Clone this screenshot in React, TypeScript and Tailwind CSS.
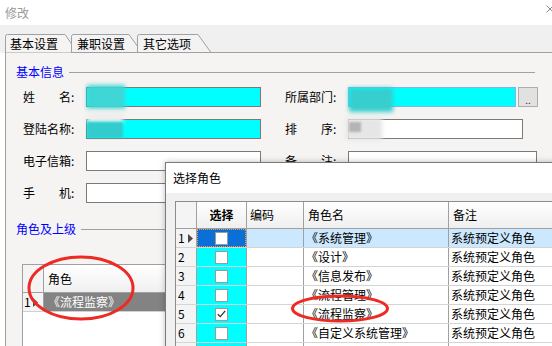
import React from 'react';

const roles = [
  { name: '《系统管理》', memo: '系统预定义角色', checked: false },
  { name: '《设计》', memo: '系统预定义角色', checked: false },
  { name: '《信息发布》', memo: '系统预定义角色', checked: false },
  { name: '《流程管理》', memo: '系统预定义角色', checked: false },
  { name: '《流程监察》', memo: '系统预定义角色', checked: true },
  { name: '《自定义系统管理》', memo: '系统预定义角色', checked: false },
  { name: '', memo: '', checked: false },
];

const Arrow = () => (
  <svg width="5" height="9" viewBox="0 0 5 9" className="shrink-0">
    <path d="M0 0 L5 4.5 L0 9 Z" fill="#4a4a4a" />
  </svg>
);

const Field = ({ label, w, cyan, children }: { label: string; w: string; cyan?: boolean; children?: React.ReactNode }) => (
  <div className="flex items-center">
    <span className="w-[63px] whitespace-pre">{label}</span>
    <div className={`relative h-[20px] border border-[#7a7a7a] ${w} ${cyan ? 'bg-[#00ffff]' : 'bg-white'}`}>{children}</div>
  </div>
);

const GroupHeader = ({ title }: { title: string }) => (
  <div className="ml-[10px] w-[519px] h-[16px] flex items-center gap-[5px]">
    <span className="text-[#0000ff] whitespace-nowrap">{title}</span>
    <div className="flex-1 h-px bg-[#a0a0a0]" />
  </div>
);

export default function App() {
  return (
    <div className="relative w-[552px] h-[346px] overflow-hidden bg-white text-[12px] leading-[16px] text-black font-['Noto_Sans_CJK_SC',sans-serif]">
      {/* title bar */}
      <div className="h-[25px] flex items-center pl-[5px] text-[#9a9a9a]">修改</div>
      <svg className="absolute left-[546px] top-[5px]" width="8" height="8" viewBox="0 0 8 8">
        <path d="M0.5 0.5 L7.5 7.5 M7.5 0.5 L0.5 7.5" stroke="#8a8a8a" strokeWidth="1" />
      </svg>

      {/* tabs */}
      <div className="relative h-[28px] bg-[#f0f0f0]">
        <svg className="absolute inset-0" width="552" height="28" viewBox="0 0 552 28">
          <path d="M5.5 28 V11.5 Q5.5 9.5 7.5 9.5 H65 L78 28 Z" fill="#f5f4f2" stroke="#a0a0a0" />
          <path d="M71.5 27.5 V11.5 Q71.5 9.5 73.5 9.5 H129 L142 27.5" fill="#f3f3f3" stroke="#a0a0a0" />
          <path d="M137.5 27.5 V11.5 Q137.5 9.5 139.5 9.5 H198 L211 27.5" fill="#f3f3f3" stroke="#a0a0a0" />
          <path d="M71 27.5 H552" stroke="#a0a0a0" />
        </svg>
        <div className="relative flex pt-[11px] pl-[10px]">
          <span className="w-[48px]">基本设置</span>
          <span className="w-[48px] ml-[19px]">兼职设置</span>
          <span className="w-[48px] ml-[18px]">其它选项</span>
        </div>
      </div>

      {/* panel */}
      <div className="ml-[5px] h-[300px] border-l border-[#a0a0a0] bg-[#f5f4f2] pt-[11px]">
        <GroupHeader title="基本信息" />
        <div className="mt-[7px] pl-[17px] flex flex-col gap-[12px]">
          <div className="flex items-center">
            <Field label="姓　　名:" w="w-[175px]" cyan>
              <div className="absolute left-[0px] top-[-3px] w-[38px] h-[24px] bg-[#3fd6d6] blur-[2px]" />
            </Field>
            <div className="ml-[24px] flex items-center">
              <Field label="所属部门:" w="w-[168px] !border-[#7eb4ea]" cyan>
                <div className="absolute left-[0px] top-[0px] w-[44px] h-[24px] bg-[#36cece] blur-[2px]" />
              </Field>
              <div className="ml-[2px] w-[20px] h-[20px] border border-[#adadad] bg-[#e1e1e1] flex items-end justify-center text-[10px] leading-[12px] text-[#333]">..</div>
            </div>
          </div>
          <div className="flex items-center">
            <Field label="登陆名称:" w="w-[175px]" cyan>
              <div className="absolute left-[0px] top-[-9px] w-[36px] h-[12px] bg-[#eeeeee] blur-[2px]" />
              <div className="absolute left-[0px] top-[2px] w-[36px] h-[16px] bg-[#33cccc] blur-[1px]" />
            </Field>
            <div className="ml-[24px]">
              <Field label="排　　序:" w="w-[175px]">
                <div className="absolute left-[-3px] top-[-2px] w-[36px] h-[22px] bg-[#e6e6e6] blur-[2px]" />
                <div className="absolute left-[0px] top-[2px] w-[12px] h-[10px] bg-[#b4b4b4] blur-[1px]" />
              </Field>
            </div>
          </div>
          <div className="flex items-center">
            <Field label="电子信箱:" w="w-[175px]" />
            <div className="ml-[24px]">
              <Field label="备　　注:" w="w-[189px]" />
            </div>
          </div>
          <div className="flex items-center">
            <Field label="手　　机:" w="w-[175px]" />
            <div className="ml-[24px]">
              <Field label="职　　务:" w="w-[189px]" />
            </div>
          </div>
        </div>

        <div className="mt-[18px]">
          <GroupHeader title="角色及上级" />
        </div>

        {/* role grid */}
        <div className="ml-[16px] mt-[27px] w-[220px] h-[120px] border-l border-t border-[#a0a0a0] bg-white">
          <div className="flex h-[28px] border-b border-[#a0a0a0]">
            <div className="w-[21px] border-r border-[#a0a0a0] bg-[#f4f4f4]" />
            <div className="flex-1 flex items-center pl-[4px] bg-gradient-to-b from-white to-[#f0f0f0]">角色</div>
          </div>
          <div className="flex h-[19px] border-b border-[#d0d0d0]">
            <div className="w-[21px] border-r border-[#a0a0a0] bg-[#f4f4f4] flex items-center gap-[2px] pl-[1px]">
              <span>1</span>
              <Arrow />
            </div>
            <div className="flex-1 flex items-center pl-[4px] bg-[#838383] text-white">《流程监察》</div>
          </div>
        </div>
      </div>

      {/* select role dialog */}
      <div className="absolute left-[165px] top-[162px] w-[420px] h-[200px] border border-[#7a7a7a] bg-[#f0f0f0] shadow-[0_0_6px_rgba(0,0,0,0.25)]">
        <div className="h-[30px] bg-white flex items-center pl-[7px]">选择角色</div>
        <div className="pt-[8px] pl-[9px]">
          <div className="w-[420px] border-l border-t border-[#8c8c8c] bg-white">
            <div className="flex h-[27px] border-b border-[#a0a0a0] bg-gradient-to-b from-white to-[#efefef]">
              <div className="w-[21px] border-r border-[#a0a0a0] bg-[#f4f4f4]" />
              <div className="w-[50px] border-r border-[#a0a0a0] flex items-center justify-center font-bold">选择</div>
              <div className="w-[57px] border-r border-[#a0a0a0] flex items-center pl-[3px]">编码</div>
              <div className="w-[145px] border-r border-[#a0a0a0] flex items-center pl-[4px]">角色名</div>
              <div className="flex-1 flex items-center pl-[4px]">备注</div>
            </div>
            {roles.map((r, i) => {
              const sel = i === 0;
              return (
                <div key={i} className="flex h-[19px] border-b border-[#d4d4d4]">
                  <div className="w-[21px] border-r border-[#a0a0a0] bg-[#f4f4f4] flex items-center gap-[3px] pl-[2px]">
                    {r.name && <span>{i + 1}</span>}
                    {sel && <Arrow />}
                  </div>
                  <div className={`relative w-[50px] border-r border-[#a0a0a0] flex items-center justify-center ${sel ? 'bg-[#0a6fd6]' : 'bg-[#00ffff]'}`}>
                    {sel && <div className="absolute inset-0 border border-dotted border-[#f39c3a]" />}
                    <div className="w-[13px] h-[13px] bg-white border border-[#9a9a9a] flex items-center justify-center">
                      {r.checked && (
                        <svg width="9" height="8" viewBox="0 0 9 8">
                          <path d="M0.8 4.2 L3.3 6.6 L8.2 0.8" fill="none" stroke="#333" strokeWidth="1.3" />
                        </svg>
                      )}
                    </div>
                  </div>
                  <div className={`w-[57px] border-r border-[#a0a0a0] ${sel ? 'bg-[#cce8ff]' : ''}`} />
                  <div className={`w-[145px] border-r border-[#a0a0a0] flex items-center pl-[2px] whitespace-nowrap ${sel ? 'bg-[#cce8ff]' : ''}`}>{r.name}</div>
                  <div className={`flex-1 flex items-center pl-[2px] whitespace-nowrap ${sel ? 'bg-[#cce8ff]' : ''}`}>{r.memo}</div>
                </div>
              );
            })}
          </div>
        </div>
      </div>

      {/* annotation circles */}
      <svg className="absolute inset-0 pointer-events-none" width="552" height="346" viewBox="0 0 552 346">
        <ellipse cx="81" cy="288" rx="52" ry="31" fill="none" stroke="#ee2a24" strokeWidth="3" />
        <ellipse cx="340" cy="308.5" rx="47.5" ry="12.5" fill="none" stroke="#ee2a24" strokeWidth="3" />
      </svg>
    </div>
  );
}
